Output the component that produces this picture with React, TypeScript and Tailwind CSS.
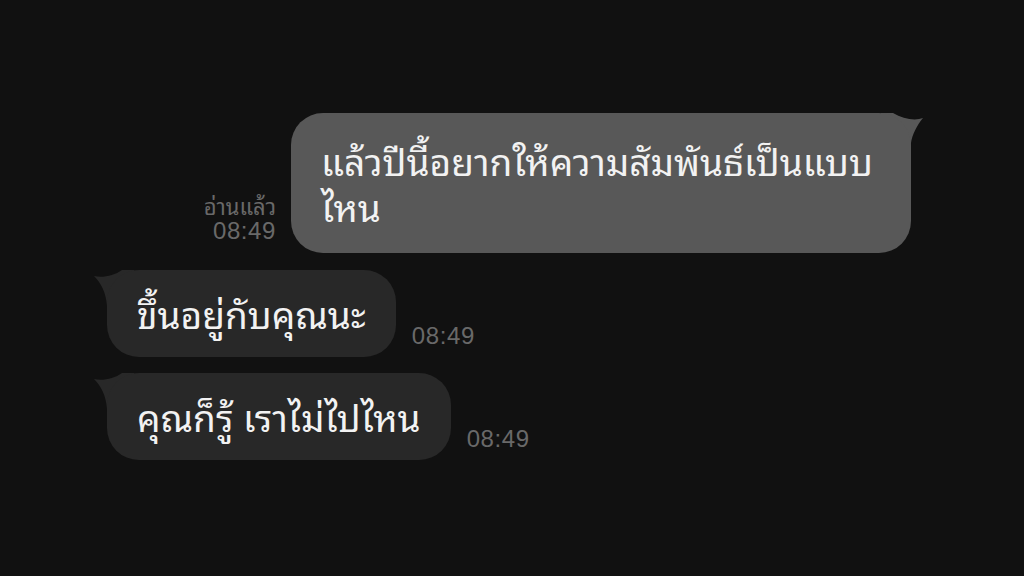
import React from 'react'

function SentTail() {
  return (
    <svg className="absolute right-[-12px] top-0" width="42" height="40" viewBox="0 0 42 40">
      <path d="M0 0 H12 C22 6 34 8 42 5 C36 12 31 22 30 30 L28 40 H0 Z" fill="#585858" />
    </svg>
  )
}

function ReceivedTail() {
  return (
    <svg className="absolute left-[-13px] top-0" width="40" height="36" viewBox="0 0 40 36">
      <path d="M40 0 H28 C20 6 8 8 0 6 C7 13 12 22 13 36 H40 Z" fill="#282828" />
    </svg>
  )
}

function Time({ children }: { children: React.ReactNode }) {
  return (
    <span className="block font-['Liberation_Sans',Arial,sans-serif] text-[24px] leading-[26px] tracking-[0.6px] text-[#696969]">
      {children}
    </span>
  )
}

function Received({ text, mt }: { text: string; mt: string }) {
  return (
    <div className={`flex items-end gap-[16px] pl-[107px] ${mt}`}>
      <div className="relative">
        <ReceivedTail />
        <div className="relative whitespace-nowrap rounded-[32px] bg-[#282828] px-[30px] pt-[20px] pb-[21px] font-['Noto_Sans_Thai_Looped','Noto_Sans_Thai',sans-serif] text-[37px] leading-[46px] text-[#f2f2f2]">
          {text}
        </div>
      </div>
      <div className="mb-[8px]">
        <Time>08:49</Time>
      </div>
    </div>
  )
}

export default function App() {
  return (
    <div className="h-[576px] w-[1024px] overflow-hidden bg-[#111111] pt-[113px]">
      <div className="flex items-end justify-end gap-[15px] pr-[113px]">
        <div className="mb-[9px] flex flex-col items-end gap-[1px]">
          <span className="block font-['Noto_Sans_Thai_Looped','Noto_Sans_Thai',sans-serif] text-[22px] leading-[24px] text-[#696969]">
            อ่านแล้ว
          </span>
          <Time>08:49</Time>
        </div>
        <div className="relative">
          <SentTail />
          <div className="relative w-[620px] whitespace-pre rounded-[32px] bg-[#585858] px-[30px] py-[24px] font-['Noto_Sans_Thai_Looped','Noto_Sans_Thai',sans-serif] text-[37px] leading-[46px] text-[#f2f2f2]">
            {'แล้วปีนี้อยากให้ความสัมพันธ์เป็นแบบ\nไหน'}
          </div>
        </div>
      </div>

      <Received text="ขึ้นอยู่กับคุณนะ" mt="mt-[17px]" />
      <Received text="คุณก็รู้ เราไม่ไปไหน" mt="mt-[16px]" />
    </div>
  )
}
